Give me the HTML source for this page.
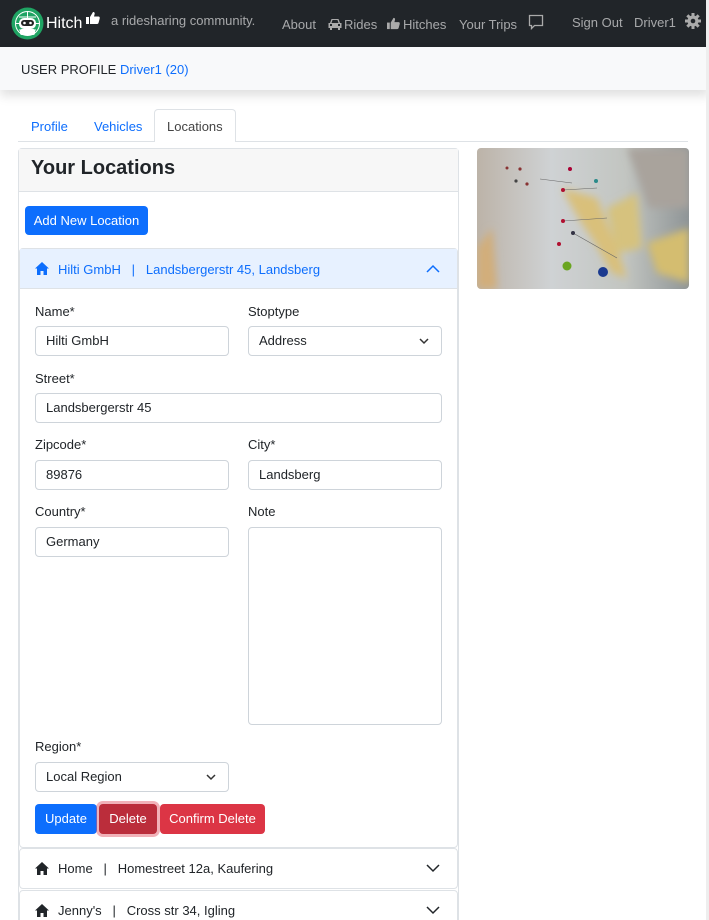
<!DOCTYPE html>
<html><head><meta charset="utf-8"><style>
*{box-sizing:border-box;margin:0;padding:0}
html,body{width:709px;height:920px;overflow:hidden}
body{background:#fff;font-family:"Liberation Sans",sans-serif;color:#212529;position:relative;font-size:13px}
.a{position:absolute;white-space:nowrap}
.nav{position:absolute;left:0;top:0;width:709px;height:47px;background:#212529}
.nav .t{color:rgba(255,255,255,.6);font-size:13px}
.hdr{position:absolute;left:0;top:47px;width:709px;height:43px;background:#f8f9fa;box-shadow:0 6px 10px rgba(0,0,0,.12)}
.blue{color:#0d6efd}
.inp{position:absolute;border:1px solid #ced4da;border-radius:4px;height:30px;background:#fff;padding:0 10px;line-height:28px;font-size:13px}
.lbl{position:absolute;font-size:13px}
.chev{position:absolute;right:12px;top:11px}
.btn{position:absolute;top:804px;height:30px;border-radius:4px;color:#fff;font-size:13px;line-height:30px;text-align:center}
</style></head><body>
<div class="nav">
  <svg class="a" style="left:11px;top:7px" width="33" height="33" viewBox="0 0 33 33"><circle cx="16.5" cy="16.5" r="16" fill="#1fa463"/><circle cx="16.5" cy="16.5" r="12" fill="none" stroke="#fff" stroke-width="1"/><path d="M4.5 16.5h24M16.5 4.5v24M8 10h17M8 23h17" stroke="#fff" stroke-width="1"/><rect x="8" y="11" width="17" height="11" rx="5" fill="#fff"/><rect x="10" y="13" width="13" height="6" rx="3" fill="#222"/><circle cx="13.5" cy="16" r="1.3" fill="#fff"/><circle cx="19.5" cy="16" r="1.3" fill="#fff"/><rect x="9" y="22" width="15" height="6" rx="2" fill="#fff"/></svg>
  <div class="a" style="left:46px;top:15px;color:#fff;font-size:16px">Hitch</div>
  <svg class="a" style="left:86px;top:11px" width="14" height="14" viewBox="0 0 14 14"><rect x="0" y="6" width="3" height="7" fill="#fff"/><path d="M4 6 7 1c1.5 0 2 1 1.5 2.5L8 5.5h4.5c1 0 1.5 1 1.2 2L12.5 12c-.3.7-1 1-1.5 1H4z" fill="#fff"/></svg>
  <div class="a t" style="left:111px;top:13px">a ridesharing community.</div>
  <div class="a t" style="left:282px;top:17px">About</div>
  <svg class="a" style="left:328px;top:18px" width="14" height="12" viewBox="0 0 14 12"><path d="M2 5 3.5 1h7L12 5h1.5v5H12v2h-2v-2H4v2H2v-2H.5V5z" fill="#aaa"/><rect x="2" y="6" width="2" height="2" fill="#212529"/><rect x="10" y="6" width="2" height="2" fill="#212529"/><path d="M3.5 5l1-3h5l1 3z" fill="#212529"/></svg>
  <div class="a t" style="left:344px;top:17px">Rides</div>
  <svg class="a" style="left:387px;top:17px" width="13" height="13" viewBox="0 0 14 14"><rect x="0" y="6" width="3" height="7" fill="#aaa"/><path d="M4 6 7 1c1.5 0 2 1 1.5 2.5L8 5.5h4.5c1 0 1.5 1 1.2 2L12.5 12c-.3.7-1 1-1.5 1H4z" fill="#aaa"/></svg>
  <div class="a t" style="left:403px;top:17px">Hitches</div>
  <div class="a t" style="left:459px;top:17px">Your Trips</div>
  <svg class="a" style="left:528px;top:14px" width="16" height="16" viewBox="0 0 16 16"><path d="M1.5 1.5h13v10h-8l-3 3v-3h-2z" fill="none" stroke="#aaa" stroke-width="1.3"/></svg>
  <div class="a t" style="left:572px;top:15px">Sign Out</div>
  <div class="a t" style="left:634px;top:15px">Driver1</div>
  <svg class="a" style="left:685px;top:13px" width="16" height="16" viewBox="0 0 16 16"><g fill="#aaa"><circle cx="8" cy="8" r="5.5"/><rect x="6.5" y="0" width="3" height="16"/><rect x="0" y="6.5" width="16" height="3"/><rect x="6.5" y="0" width="3" height="16" transform="rotate(45 8 8)"/><rect x="6.5" y="0" width="3" height="16" transform="rotate(-45 8 8)"/></g><circle cx="8" cy="8" r="2.3" fill="#212529"/></svg>
</div>
<div class="hdr"><div class="a" style="left:21px;top:15px;font-size:13px">USER PROFILE <span class="blue">Driver1 (20)</span></div></div>

<div class="a" style="left:18px;top:141px;width:670px;height:1px;background:#dee2e6"></div>
<div class="a" style="left:154px;top:109px;width:82px;height:33px;border:1px solid #dee2e6;border-bottom:none;border-radius:4px 4px 0 0;background:#fff"></div>
<div class="a blue" style="left:31px;top:119px">Profile</div>
<div class="a blue" style="left:94px;top:119px">Vehicles</div>
<div class="a" style="left:167px;top:119px;color:#444">Locations</div>

<div class="a" style="left:18px;top:148px;width:441px;height:780px;border:1px solid #dee2e6;border-radius:4px"></div>
<div class="a" style="left:19px;top:149px;width:439px;height:43px;background:#f7f7f7;border-bottom:1px solid #dee2e6"></div>
<div class="a" style="left:31px;top:157px;font-size:20px;font-weight:bold">Your Locations</div>
<div class="a" style="left:25px;top:206px;width:123px;height:29px;background:#0d6efd;border-radius:4px;color:#fff;line-height:29px;text-align:center">Add New Location</div>

<div class="a" style="left:19px;top:248px;width:439px;height:600px;border:1px solid #dee2e6;border-radius:4px"></div>
<div class="a" style="left:20px;top:249px;width:437px;height:40px;background:#e7f1ff;border-bottom:1px solid #dee2e6"></div>
<svg class="a" style="left:35px;top:262px" width="14" height="13" viewBox="0 0 14 13"><path d="M7 0 0 6.5h2V13h3.5V9h3v4H12V6.5h2z" fill="#0d6efd"/></svg>
<div class="a blue" style="left:58px;top:262px">Hilti GmbH &nbsp;&nbsp;|&nbsp;&nbsp; Landsbergerstr 45, Landsberg</div>
<svg class="a" style="left:426px;top:264px" width="14" height="9" viewBox="0 0 14 9"><path d="M1 8l6-6 6 6" fill="none" stroke="#0d6efd" stroke-width="1.5"/></svg>

<div class="lbl" style="left:35px;top:304px">Name*</div>
<div class="inp" style="left:35px;top:326px;width:194px">Hilti GmbH</div>
<div class="lbl" style="left:248px;top:304px">Stoptype</div>
<div class="inp" style="left:248px;top:326px;width:194px">Address<svg class="chev" width="10" height="7" viewBox="0 0 10 7"><path d="M1 1l4 4 4-4" fill="none" stroke="#333" stroke-width="1.5"/></svg></div>
<div class="lbl" style="left:35px;top:371px">Street*</div>
<div class="inp" style="left:35px;top:393px;width:407px">Landsbergerstr 45</div>
<div class="lbl" style="left:35px;top:437px">Zipcode*</div>
<div class="inp" style="left:35px;top:460px;width:194px">89876</div>
<div class="lbl" style="left:248px;top:437px">City*</div>
<div class="inp" style="left:248px;top:460px;width:194px">Landsberg</div>
<div class="lbl" style="left:35px;top:504px">Country*</div>
<div class="inp" style="left:35px;top:527px;width:194px">Germany</div>
<div class="lbl" style="left:248px;top:504px">Note</div>
<div class="inp" style="left:248px;top:527px;width:194px;height:198px"></div>
<div class="lbl" style="left:35px;top:739px">Region*</div>
<div class="inp" style="left:35px;top:762px;width:194px">Local Region<svg class="chev" width="10" height="7" viewBox="0 0 10 7"><path d="M1 1l4 4 4-4" fill="none" stroke="#333" stroke-width="1.5"/></svg></div>
<div class="btn" style="left:35px;width:62px;background:#0d6efd">Update</div>
<div class="btn" style="left:99px;width:58px;background:#bb2d3b;box-shadow:0 0 0 3px rgba(225,83,97,.45)">Delete</div>
<div class="btn" style="left:160px;width:105px;background:#dc3545">Confirm Delete</div>

<div class="a" style="left:19px;top:848px;width:439px;height:41px;border:1px solid #dee2e6;border-radius:4px"></div>
<svg class="a" style="left:35px;top:862px" width="14" height="13" viewBox="0 0 14 13"><path d="M7 0 0 6.5h2V13h3.5V9h3v4H12V6.5h2z" fill="#212529"/></svg>
<div class="a" style="left:58px;top:861px">Home &nbsp;&nbsp;|&nbsp;&nbsp; Homestreet 12a, Kaufering</div>
<svg class="a" style="left:426px;top:864px" width="14" height="9" viewBox="0 0 14 9"><path d="M1 1l6 6 6-6" fill="none" stroke="#212529" stroke-width="1.5"/></svg>
<div class="a" style="left:19px;top:890px;width:439px;height:41px;border:1px solid #dee2e6;border-radius:4px"></div>
<svg class="a" style="left:35px;top:904px" width="14" height="13" viewBox="0 0 14 13"><path d="M7 0 0 6.5h2V13h3.5V9h3v4H12V6.5h2z" fill="#212529"/></svg>
<div class="a" style="left:58px;top:903px">Jenny's &nbsp;&nbsp;|&nbsp;&nbsp; Cross str 34, Igling</div>
<svg class="a" style="left:426px;top:906px" width="14" height="9" viewBox="0 0 14 9"><path d="M1 1l6 6 6-6" fill="none" stroke="#212529" stroke-width="1.5"/></svg>

<svg class="a" style="left:477px;top:148px;border-radius:4px" width="212" height="141" viewBox="0 0 212 141">
<defs><linearGradient id="g" x1="0" y1="0" x2="1" y2="0"><stop offset="0" stop-color="#bcb3a8"/><stop offset=".35" stop-color="#cfd2d4"/><stop offset=".7" stop-color="#c2c5c1"/><stop offset="1" stop-color="#8f9597"/></linearGradient><filter id="b"><feGaussianBlur stdDeviation="4"/></filter></defs>
<rect width="212" height="141" fill="url(#g)"/>
<g filter="url(#b)"><path d="M85 40 Q100 70 115 90 L135 125 L150 130 L140 100 L120 50Z" fill="#d9c07a"/><path d="M130 60 L160 45 L165 100 L140 105Z" fill="#d6c27e"/><path d="M170 95 L212 80 L212 135 L180 125Z" fill="#d4bd70"/><path d="M0 100 L15 80 L20 141 L0 141Z" fill="#d2ae7a"/><path d="M150 0h62v60h-40z" fill="#a9a39c"/></g>
<g fill="none" stroke="#666" stroke-width=".6"><path d="M86 42 120 40M86 73 130 70M96 85 140 110M63 31 95 35"/></g>
<circle cx="86" cy="42" r="2" fill="#b01030"/><circle cx="86" cy="73" r="2" fill="#b01030"/><circle cx="96" cy="85" r="2" fill="#334"/><circle cx="93" cy="21" r="2" fill="#a03"/><circle cx="43" cy="21" r="1.6" fill="#833"/><circle cx="39" cy="33" r="1.6" fill="#444"/><circle cx="50" cy="36" r="1.6" fill="#833"/><circle cx="82" cy="96" r="2" fill="#b01030"/><circle cx="90" cy="118" r="4.5" fill="#6aa520"/><circle cx="126" cy="124" r="5" fill="#1b3a8f"/><circle cx="119" cy="33" r="2" fill="#2a8a8a"/><circle cx="30" cy="20" r="1.5" fill="#833"/>
</svg>
<div class="a" style="left:706px;top:0;width:3px;height:920px;background:#eee"></div>
</body></html>
